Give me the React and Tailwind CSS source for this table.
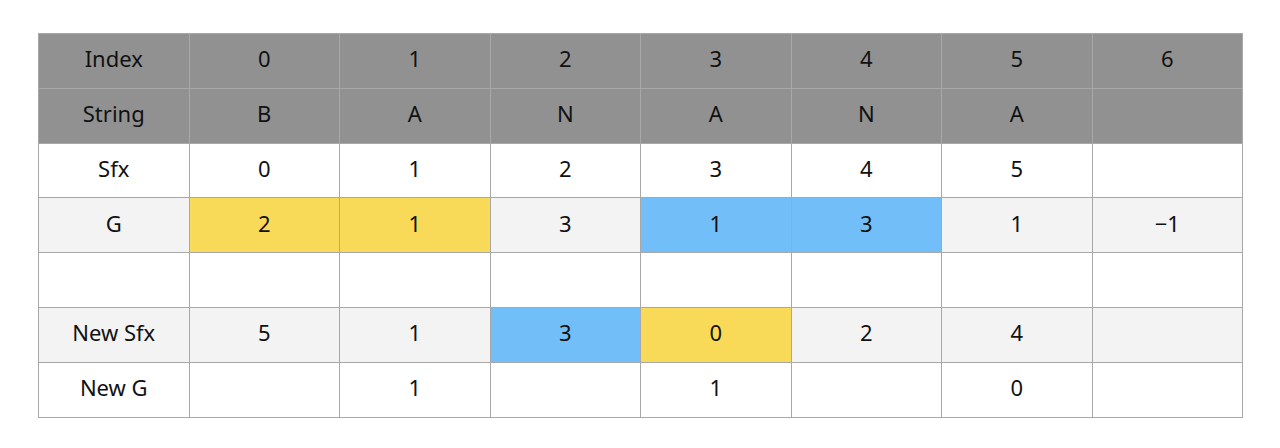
import React from 'react';

const rows = [
  { label: 'Index', cells: ['0', '1', '2', '3', '4', '5', '6'], head: true },
  { label: 'String', cells: ['B', 'A', 'N', 'A', 'N', 'A', ''], head: true },
  { label: 'Sfx', cells: ['0', '1', '2', '3', '4', '5', ''] },
  { label: 'G', cells: ['2', '1', '3', '1', '3', '1', '−1'], alt: true, marks: { 0: 'y', 1: 'y', 3: 'b', 4: 'b' } },
  { label: '', cells: ['', '', '', '', '', '', ''] },
  { label: 'New Sfx', cells: ['5', '1', '3', '0', '2', '4', ''], alt: true, marks: { 2: 'b', 3: 'y' } },
  { label: 'New G', cells: ['', '1', '', '1', '', '0', ''] },
];

const rowBg = (r) => (r.head ? 'bg-[#919191]' : r.alt ? 'bg-[#f3f3f3]' : 'bg-white');

const markBg = { y: 'bg-[#f8da58]', b: 'bg-[#72bef8]' };

export default function App() {
  return (
    <div className="bg-white h-[448px] pt-[33px] pl-[38px] font-['Noto_Sans',sans-serif] text-[22px] leading-none text-[#111]">
      <table className="w-[1205px] border-collapse table-fixed">
        <tbody>
          {rows.map((r, i) => (
            <tr key={i} className={`h-[54.8px] ${rowBg(r)}`}>
              <td className="border border-[#a8a8a8] text-center p-0 pb-[5px]">{r.label}</td>
              {r.cells.map((c, j) => (
                <td
                  key={j}
                  className={`border border-[#a8a8a8] text-center p-0 pb-[5px] ${r.marks && r.marks[j] ? markBg[r.marks[j]] : ''}`}
                >
                  {c}
                </td>
              ))}
            </tr>
          ))}
        </tbody>
      </table>
    </div>
  );
}
